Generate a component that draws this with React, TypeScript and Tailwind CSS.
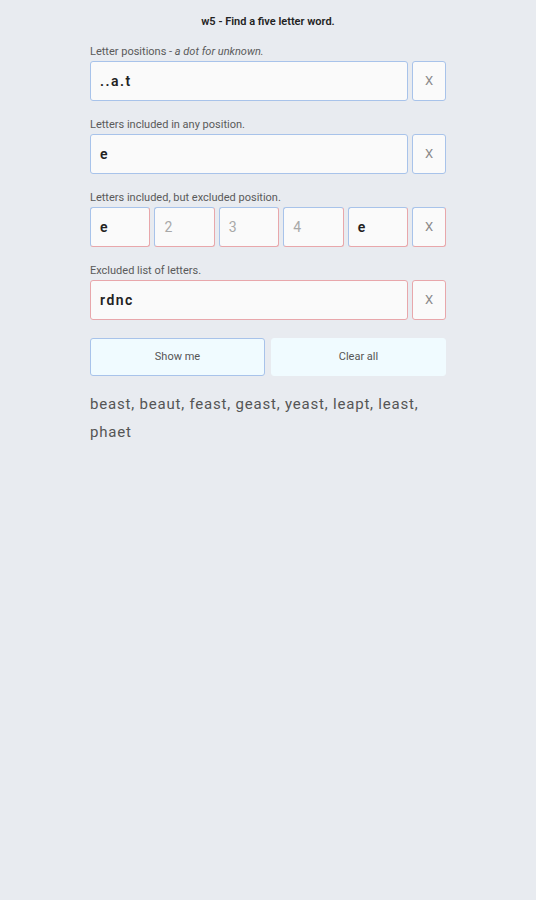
import React from "react";

const blue = "border-[#a8c3ea]";

function XBtn({ border }: { border: string }) {
  return (
    <div
      className={`w-[34px] h-[40px] shrink-0 rounded-[3px] border bg-[#fafafa] flex items-center justify-center text-[13px] text-[#8a8a8a] ${border}`}
    >
      X
    </div>
  );
}

function Label({ children }: { children: React.ReactNode }) {
  return <div className="text-[11px] leading-[14px] text-[#5a5a5a] mb-[2px]">{children}</div>;
}

export default function App() {
  const boxes = [
    { v: "e", ph: false },
    { v: "2", ph: true },
    { v: "3", ph: true },
    { v: "4", ph: true },
    { v: "e", ph: false },
  ];
  return (
    <div
      className="min-h-[900px] w-full bg-[#e8ebf0] flex justify-center"
      style={{ fontFamily: "Roboto, 'Noto Sans', sans-serif" }}
    >
      <div className="w-[356px] pt-[15px] flex flex-col">
        <div className="text-center text-[11px] leading-[14px] font-semibold text-[#222] mb-[16px]">
          w5 - Find a five letter word.
        </div>

        <div className="mb-[17px]">
          <Label>
            Letter positions - <i>a dot for unknown.</i>
          </Label>
          <div className="flex gap-[4px]">
            <div className={`flex-1 h-[40px] rounded-[3px] border ${blue} bg-[#fafafa] flex items-center px-[9px] text-[14px] font-semibold tracking-[1.5px] text-[#222]`}>
              ..a.t
            </div>
            <XBtn border={blue} />
          </div>
        </div>

        <div className="mb-[17px]">
          <Label>Letters included in any position.</Label>
          <div className="flex gap-[4px]">
            <div className={`flex-1 h-[40px] rounded-[3px] border ${blue} bg-[#fafafa] flex items-center px-[9px] text-[14px] font-semibold tracking-[1.5px] text-[#222]`}>
              e
            </div>
            <XBtn border={blue} />
          </div>
        </div>

        <div className="mb-[17px]">
          <Label>Letters included, but excluded position.</Label>
          <div className="flex gap-[4px]">
            {boxes.map((b, i) => (
              <div
                key={i}
                className={`flex-1 h-[40px] rounded-[3px] border border-t-[#a8c3ea] border-l-[#a8c3ea] border-r-[#e8a7ab] border-b-[#e8a7ab] bg-[#fafafa] flex items-center px-[9px] text-[14px] ${
                  b.ph ? "text-[#a8a8a8]" : "font-semibold text-[#222]"
                }`}
              >
                {b.v}
              </div>
            ))}
            <XBtn border="border-t-[#a8c3ea] border-l-[#a8c3ea] border-r-[#e8a7ab] border-b-[#e8a7ab]" />
          </div>
        </div>

        <div className="mb-[18px]">
          <Label>Excluded list of letters.</Label>
          <div className="flex gap-[4px]">
            <div className="flex-1 h-[40px] rounded-[3px] border border-[#e8a7ab] bg-[#fafafa] flex items-center px-[9px] text-[14px] font-semibold tracking-[1.5px] text-[#222]">
              rdnc
            </div>
            <XBtn border="border-[#e8a7ab]" />
          </div>
        </div>

        <div className="flex gap-[6px] mb-[14px]">
          <div className={`flex-1 h-[38px] rounded-[3px] border ${blue} bg-[#f0fbff] flex items-center justify-center text-[11px] text-[#555]`}>
            Show me
          </div>
          <div className="flex-1 h-[38px] rounded-[3px] border border-[#f0fbff] bg-[#f0fbff] flex items-center justify-center text-[11px] text-[#555]">
            Clear all
          </div>
        </div>

        <div className="text-[15px] leading-[28px] tracking-[0.8px] text-[#555]">
          beast, beaut, feast, geast, yeast, leapt, least, phaet
        </div>
      </div>
    </div>
  );
}
